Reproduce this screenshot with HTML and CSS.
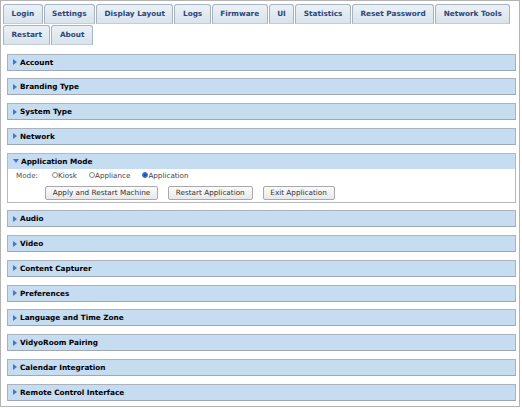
FILE: index.html
```html
<!DOCTYPE html>
<html>
<head>
<meta charset="utf-8">
<link rel="stylesheet" href="styles.css">
</head>
<body>
<div class="frame">
  <div class="tabs">
    <div class="tab">Login</div>
    <div class="tab">Settings</div>
    <div class="tab">Display Layout</div>
    <div class="tab">Logs</div>
    <div class="tab">Firmware</div>
    <div class="tab">UI</div>
    <div class="tab">Statistics</div>
    <div class="tab">Reset Password</div>
    <div class="tab">Network Tools</div>
    <div class="tab">Restart</div>
    <div class="tab">About</div>
  </div>
  <div class="panels">
    <div class="panel"><div class="head"><span class="arrow"></span>Account</div></div>
    <div class="panel"><div class="head"><span class="arrow"></span>Branding Type</div></div>
    <div class="panel"><div class="head"><span class="arrow"></span>System Type</div></div>
    <div class="panel"><div class="head"><span class="arrow"></span>Network</div></div>
    <div class="panel open">
      <div class="head"><span class="arrow down"></span>Application Mode</div>
      <div class="body">
        <div class="mode-row">
          <span class="mode-label">Mode:</span>
          <span class="radio"><span class="dot"></span>Kiosk</span>
          <span class="radio"><span class="dot"></span>Appliance</span>
          <span class="radio"><span class="dot on"></span>Application</span>
        </div>
        <div class="btn-row">
          <span class="btn">Apply and Restart Machine</span>
          <span class="btn">Restart Application</span>
          <span class="btn">Exit Application</span>
        </div>
      </div>
    </div>
    <div class="panel"><div class="head"><span class="arrow"></span>Audio</div></div>
    <div class="panel"><div class="head"><span class="arrow"></span>Video</div></div>
    <div class="panel"><div class="head"><span class="arrow"></span>Content Capturer</div></div>
    <div class="panel"><div class="head"><span class="arrow"></span>Preferences</div></div>
    <div class="panel"><div class="head"><span class="arrow"></span>Language and Time Zone</div></div>
    <div class="panel"><div class="head"><span class="arrow"></span>VidyoRoom Pairing</div></div>
    <div class="panel"><div class="head"><span class="arrow"></span>Calendar Integration</div></div>
    <div class="panel"><div class="head"><span class="arrow"></span>Remote Control Interface</div></div>
  </div>
</div>
</body>
</html>
```
FILE: styles.css
```css
html, body {
  margin: 0;
  padding: 0;
  background: #ffffff;
}
.frame {
  box-sizing: border-box;
  width: 520px;
  height: 407px;
  border: 1px solid #b3b3b3;
  font-family: "DejaVu Sans", Verdana, sans-serif;
  overflow: hidden;
}
.tabs {
  display: flex;
  flex-wrap: wrap;
  column-gap: 1px;
  row-gap: 1px;
  padding: 3px 0 0 2px;
}
.tab {
  box-sizing: border-box;
  height: 20px;
  line-height: 18px;
  padding: 0 7.5px;
  border: 1px solid #a7b3bf;
  border-bottom-color: #c4ccd4;
  border-radius: 3px 3px 0 0;
  background: linear-gradient(#ebf1f6, #d9e3ec);
  color: #2a477a;
  font-weight: bold;
  font-size: 7.3px;
  white-space: nowrap;
}
.panels {
  display: flex;
  flex-direction: column;
  gap: 7.75px;
  margin: 8.5px 3px 0 6px;
}
.panel .head {
  box-sizing: border-box;
  height: 17px;
  line-height: 15px;
  padding-left: 5px;
  background: #c6dcf1;
  border: 1px solid #aab3bc;
  border-bottom-color: #9ea8b2;
  font-weight: bold;
  font-size: 7.3px;
  color: #000;
  display: flex;
  align-items: center;
}
.arrow {
  display: inline-block;
  width: 0;
  height: 0;
  border-top: 3px solid transparent;
  border-bottom: 3px solid transparent;
  border-left: 4px solid #3f78d0;
  margin-right: 3px;
}
.arrow.down {
  border-left: 3px solid transparent;
  border-right: 3px solid transparent;
  border-top: 4px solid #3f78d0;
  border-bottom: 0;
  margin-right: 2px;
}
.panel.open {
  border: 1px solid #b5b9be;
}
.panel.open .head {
  border: 0;
  height: 15px;
}
.body {
  height: 33px;
  padding-left: 8px;
}
.mode-row {
  display: flex;
  align-items: center;
  height: 13px;
  font-size: 7.2px;
  color: #555;
}
.mode-label {
  width: 36px;
}
.radio {
  display: inline-flex;
  align-items: center;
  margin-right: 12px;
  color: #444;
}
.dot {
  box-sizing: border-box;
  display: inline-block;
  width: 6px;
  height: 6px;
  border: 1px solid #8a8a8a;
  border-radius: 50%;
  background: #fff;
}
.dot.on {
  border-color: #2e66c2;
  background: radial-gradient(circle, #1f4fb0 40%, #7ba3e4 100%);
}
.btn-row {
  display: flex;
  gap: 10px;
  margin-top: 4px;
  padding-left: 29px;
}
.btn {
  box-sizing: border-box;
  height: 14px;
  line-height: 12px;
  padding: 0 6.8px;
  border: 1px solid #a9a9a9;
  border-radius: 2px;
  background: linear-gradient(#fbfbfb, #e8e8e8);
  font-size: 7.25px;
  color: #333;
  white-space: nowrap;
}
```
